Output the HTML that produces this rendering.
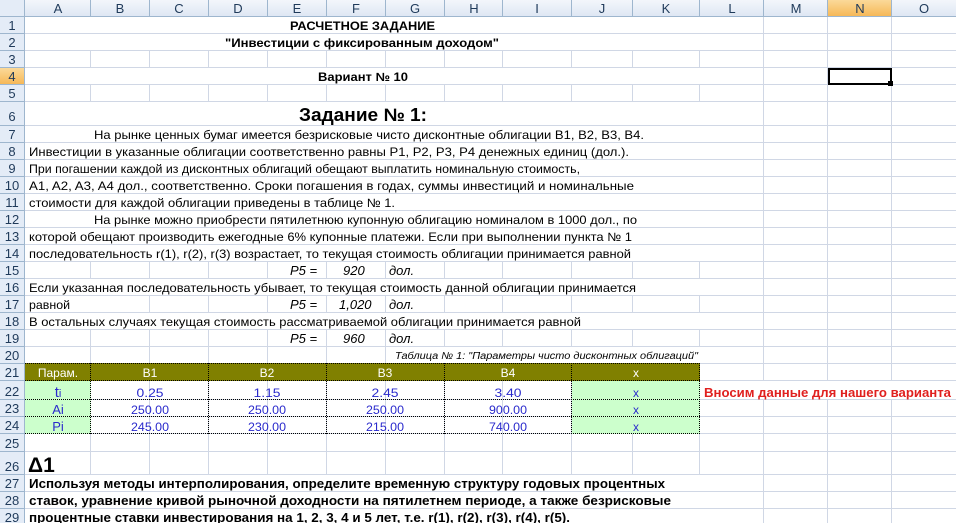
<!DOCTYPE html>
<html><head><meta charset="utf-8"><style>
html,body{margin:0;padding:0;background:#fff;overflow:hidden}
svg{display:block}
text{font-family:"Liberation Sans","DejaVu Sans",sans-serif}
</style></head><body>
<svg width="956" height="523" xmlns="http://www.w3.org/2000/svg">
<defs>
<linearGradient id="hg" x1="0" y1="0" x2="0" y2="1"><stop offset="0" stop-color="#f3f6fb"/><stop offset="1" stop-color="#dde6f3"/></linearGradient>
<linearGradient id="og" x1="0" y1="0" x2="0" y2="1"><stop offset="0" stop-color="#fbd999"/><stop offset="1" stop-color="#f6b654"/></linearGradient>
</defs>
<rect width="956" height="523" fill="#fff"/>
<rect x="0" y="0" width="956" height="17" fill="url(#hg)"/>
<rect x="0" y="0" width="25" height="523" fill="#e4ecf7"/>
<rect x="828" y="0" width="64" height="17" fill="url(#og)"/>
<rect x="0" y="68" width="25" height="17" fill="url(#og)"/>
<g stroke="#d0d7e5" stroke-width="1">
<path d="M25 33.5H956M25 50.5H956M25 67.5H956M25 84.5H956M25 101.5H956M25 125.5H956M25 142.5H956M25 159.5H956M25 176.5H956M25 193.5H956M25 210.5H956M25 227.5H956M25 244.5H956M25 261.5H956M25 278.5H956M25 295.5H956M25 312.5H956M25 329.5H956M25 346.5H956M25 363.5H956M25 380.5H956M25 399.5H956M25 416.5H956M25 433.5H956M25 451.5H956M25 474.5H956M25 491.5H956M25 508.5H956"/>
<path d="M90.5 17V523M149.5 17V523M208.5 17V523M267.5 17V523M326.5 17V523M385.5 17V523M444.5 17V523M502.5 17V523M571.5 17V523M632.5 17V523M699.5 17V523M763.5 17V523M827.5 17V523M891.5 17V523"/>
</g>
<g stroke="#9eb6ce" stroke-width="1">
<path d="M0 16.5H956M24.5 0V523"/>
<path d="M0 33.5H25M0 50.5H25M0 67.5H25M0 84.5H25M0 101.5H25M0 125.5H25M0 142.5H25M0 159.5H25M0 176.5H25M0 193.5H25M0 210.5H25M0 227.5H25M0 244.5H25M0 261.5H25M0 278.5H25M0 295.5H25M0 312.5H25M0 329.5H25M0 346.5H25M0 363.5H25M0 380.5H25M0 399.5H25M0 416.5H25M0 433.5H25M0 451.5H25M0 474.5H25M0 491.5H25M0 508.5H25"/>
<path d="M90.5 0V17M149.5 0V17M208.5 0V17M267.5 0V17M326.5 0V17M385.5 0V17M444.5 0V17M502.5 0V17M571.5 0V17M632.5 0V17M699.5 0V17M763.5 0V17M827.5 0V17M891.5 0V17"/>
</g>
<g fill="#fff">
<rect x="25" y="17" width="675" height="16"/>
<rect x="25" y="34" width="675" height="16"/>
<rect x="25" y="68" width="675" height="16"/>
<rect x="25" y="102" width="675" height="23"/>
<rect x="25" y="126" width="675" height="16"/><rect x="25" y="143" width="675" height="16"/>
<rect x="25" y="160" width="675" height="16"/><rect x="25" y="177" width="675" height="16"/>
<rect x="25" y="194" width="675" height="16"/><rect x="25" y="211" width="675" height="16"/>
<rect x="25" y="228" width="675" height="16"/><rect x="25" y="245" width="675" height="16"/>
<rect x="25" y="279" width="675" height="16"/>
<rect x="25" y="296" width="124" height="16"/>
<rect x="25" y="313" width="675" height="16"/>
<rect x="386" y="347" width="314" height="16"/>
<rect x="700" y="381" width="256" height="18"/>
<rect x="25" y="475" width="675" height="16"/><rect x="25" y="492" width="675" height="16"/><rect x="25" y="509" width="675" height="14"/>
</g>
<rect x="25" y="363" width="675" height="18" fill="#808000"/>
<rect x="25" y="381" width="66" height="53" fill="#ccffcc"/>
<rect x="572" y="381" width="128" height="53" fill="#ccffcc"/>
<g stroke="#000" stroke-width="1" stroke-dasharray="1,1" fill="none">
<path d="M25 363.5H700M25 380.5H700M25 399.5H700M25 416.5H700M25 433.5H700"/>
<path d="M90.5 363V434M208.5 363V434M326.5 363V434M444.5 363V434M571.5 363V434M699.5 363V434"/>
</g>
<rect x="829" y="69" width="62" height="15" fill="none" stroke="#000" stroke-width="2"/>
<rect x="888" y="81" width="5" height="5" fill="#000"/>
<g font-size="13" fill="#1f3a5a" text-anchor="middle">
<text x="58" y="13">A</text><text x="120" y="13">B</text><text x="179" y="13">C</text><text x="238" y="13">D</text><text x="297" y="13">E</text><text x="356" y="13">F</text><text x="415" y="13">G</text><text x="474" y="13">H</text><text x="537" y="13">I</text><text x="602" y="13">J</text><text x="666" y="13">K</text><text x="732" y="13">L</text><text x="796" y="13">M</text><text x="860" y="13">N</text><text x="924" y="13">O</text>
</g>
<g font-size="13" fill="#1f3a5a" text-anchor="middle">
<text x="12" y="30">1</text><text x="12" y="47">2</text><text x="12" y="64">3</text><text x="12" y="81">4</text><text x="12" y="98">5</text><text x="12" y="121">6</text>
<text x="12" y="139">7</text><text x="12" y="156">8</text><text x="12" y="173">9</text><text x="12" y="190">10</text><text x="12" y="207">11</text><text x="12" y="224">12</text><text x="12" y="241">13</text><text x="12" y="258">14</text><text x="12" y="275">15</text><text x="12" y="292">16</text><text x="12" y="309">17</text><text x="12" y="326">18</text><text x="12" y="343">19</text><text x="12" y="360">20</text><text x="12" y="377">21</text><text x="12" y="396">22</text><text x="12" y="413">23</text><text x="12" y="430">24</text><text x="12" y="448">25</text><text x="12" y="471">26</text><text x="12" y="488">27</text><text x="12" y="505">28</text><text x="12" y="522">29</text>
</g>
<g font-weight="bold" fill="#000">
<text x="290" y="30" font-size="12" textLength="145" lengthAdjust="spacingAndGlyphs">РАСЧЕТНОЕ ЗАДАНИЕ</text>
<text x="225" y="47" font-size="12" textLength="274" lengthAdjust="spacingAndGlyphs">"Инвестиции с фиксированным доходом"</text>
<text x="318" y="81" font-size="12" textLength="90" lengthAdjust="spacingAndGlyphs">Вариант № 10</text>
<text x="299" y="121" font-size="18" textLength="128" lengthAdjust="spacingAndGlyphs">Задание № 1:</text>
</g>
<g font-size="12" fill="#000">
<text x="94" y="139" textLength="550" lengthAdjust="spacingAndGlyphs">На рынке ценных бумаг имеется безрисковые чисто дисконтные облигации B1, B2, B3, B4.</text>
<text x="29" y="156" textLength="600" lengthAdjust="spacingAndGlyphs">Инвестиции  в указанные облигации соответственно равны P1, P2, P3, P4 денежных единиц (дол.).</text>
<text x="29" y="173" textLength="551" lengthAdjust="spacingAndGlyphs">При  погашении каждой из дисконтных облигаций обещают выплатить номинальную стоимость,</text>
<text x="29" y="190" textLength="605" lengthAdjust="spacingAndGlyphs">A1, A2, A3, A4 дол., соответственно. Сроки погашения в годах, суммы инвестиций и  номинальные</text>
<text x="29" y="207" textLength="366" lengthAdjust="spacingAndGlyphs">стоимости для каждой облигации приведены в таблице № 1.</text>
<text x="94" y="224" textLength="543" lengthAdjust="spacingAndGlyphs">На рынке можно приобрести пятилетнюю купонную облигацию номиналом в 1000 дол., по</text>
<text x="29" y="241" textLength="603" lengthAdjust="spacingAndGlyphs">которой обещают производить ежегодные 6% купонные платежи. Если при выполнении пункта № 1</text>
<text x="29" y="258" textLength="602" lengthAdjust="spacingAndGlyphs">последовательность r(1), r(2), r(3) возрастает, то текущая стоимость облигации принимается равной</text>
<text x="29" y="292" textLength="607" lengthAdjust="spacingAndGlyphs">Если указанная последовательность убывает, то текущая стоимость данной облигации принимается</text>
<text x="29" y="309" textLength="41" lengthAdjust="spacingAndGlyphs">равной</text>
<text x="29" y="326" textLength="552" lengthAdjust="spacingAndGlyphs">В остальных случаях текущая стоимость рассматриваемой облигации принимается равной</text>
</g>
<g font-size="13" font-style="italic" fill="#000">
<text x="290" y="275">P5  =</text><text x="343" y="275">920</text><text x="389" y="275">дол.</text>
<text x="290" y="309">P5  =</text><text x="339" y="309">1,020</text><text x="389" y="309">дол.</text>
<text x="290" y="343">P5  =</text><text x="343" y="343">960</text><text x="389" y="343">дол.</text>
<text x="698" y="359" font-size="10" text-anchor="end" textLength="303" lengthAdjust="spacingAndGlyphs">Таблица № 1: "Параметры чисто дисконтных облигаций"</text>
</g>
<g font-family="DejaVu Sans" font-size="12" fill="#fff" text-anchor="middle">
<text x="58" y="377" font-family="Liberation Sans" font-size="12">Парам.</text>
<text x="150" y="377">B1</text><text x="267" y="377">B2</text><text x="385" y="377">B3</text><text x="508" y="377">B4</text><text x="636" y="377">x</text>
</g>
<g font-size="15" fill="#2a2acc" text-anchor="middle">
<text x="58" y="397">t<tspan font-size="11">i</tspan></text>
<text x="58" y="414" font-size="13">Ai</text>
<text x="58" y="431" font-size="13">Pi</text>
</g>
<g font-family="DejaVu Sans" font-size="12" fill="#2a2acc" text-anchor="middle">
<text x="150" y="397" textLength="27" lengthAdjust="spacingAndGlyphs">0.25</text><text x="267" y="397" textLength="27" lengthAdjust="spacingAndGlyphs">1.15</text><text x="385" y="397" textLength="27" lengthAdjust="spacingAndGlyphs">2.45</text><text x="508" y="397" textLength="27" lengthAdjust="spacingAndGlyphs">3.40</text><text x="636" y="397">x</text>
<text x="150" y="414" textLength="38" lengthAdjust="spacingAndGlyphs">250.00</text><text x="267" y="414" textLength="38" lengthAdjust="spacingAndGlyphs">250.00</text><text x="385" y="414" textLength="38" lengthAdjust="spacingAndGlyphs">250.00</text><text x="508" y="414" textLength="38" lengthAdjust="spacingAndGlyphs">900.00</text><text x="636" y="414">x</text>
<text x="150" y="431" textLength="38" lengthAdjust="spacingAndGlyphs">245.00</text><text x="267" y="431" textLength="38" lengthAdjust="spacingAndGlyphs">230.00</text><text x="385" y="431" textLength="38" lengthAdjust="spacingAndGlyphs">215.00</text><text x="508" y="431" textLength="38" lengthAdjust="spacingAndGlyphs">740.00</text><text x="636" y="431">x</text>
</g>
<text x="704" y="397" font-size="13" font-weight="bold" fill="#e0201f" textLength="247" lengthAdjust="spacingAndGlyphs">Вносим данные для нашего варианта</text>
<text x="28" y="472" font-size="21" font-weight="bold" fill="#000">Δ1</text>
<g font-size="13" font-weight="bold" fill="#000">
<text x="29" y="488" textLength="636" lengthAdjust="spacingAndGlyphs">Используя методы интерполирования, определите временную структуру годовых процентных</text>
<text x="29" y="505" textLength="642" lengthAdjust="spacingAndGlyphs">ставок, уравнение кривой рыночной доходности на пятилетнем периоде, а также  безрисковые</text>
<text x="29" y="522" textLength="541" lengthAdjust="spacingAndGlyphs">процентные ставки инвестирования на 1, 2, 3, 4 и 5 лет, т.е. r(1), r(2), r(3), r(4), r(5).</text>
</g>
</svg>
</body></html>
